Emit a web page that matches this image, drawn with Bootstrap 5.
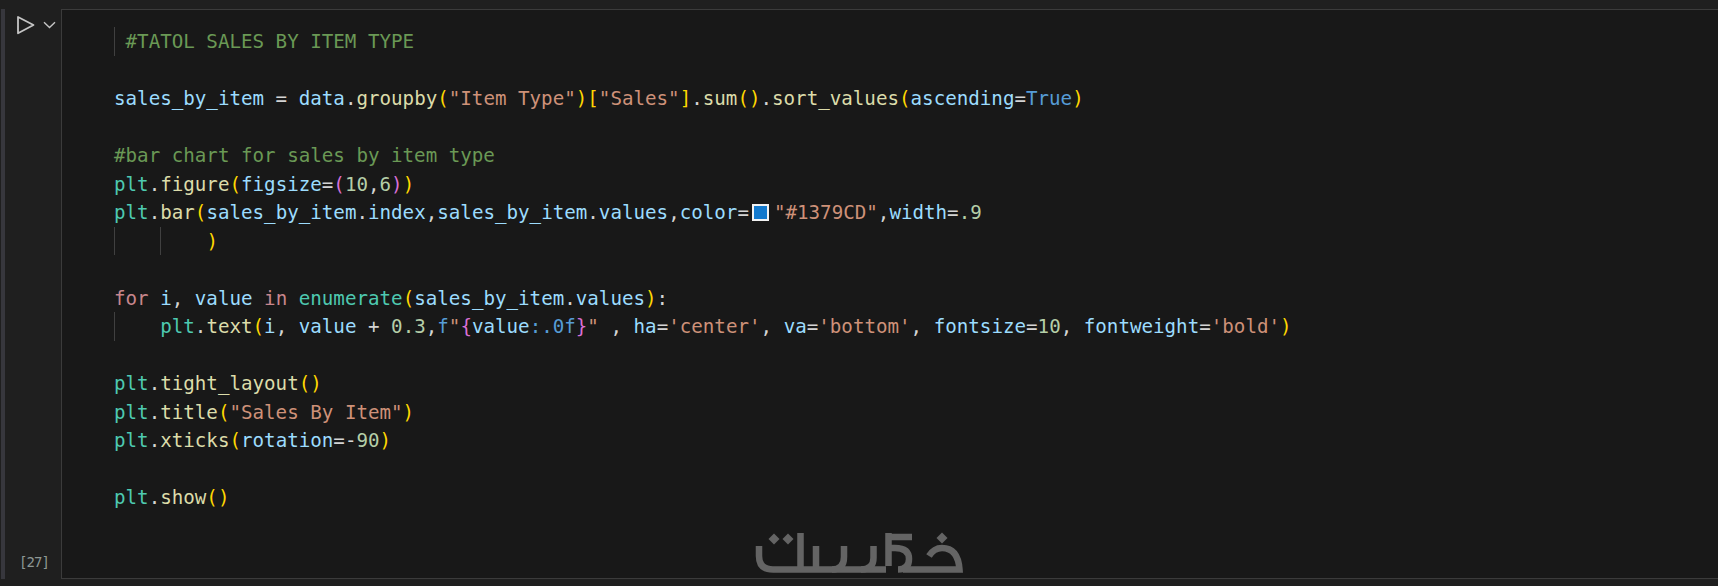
<!DOCTYPE html>
<html lang="en">
<head>
<meta charset="utf-8">
<title>Notebook cell</title>
<link href="https://cdn.jsdelivr.net/npm/bootstrap@5.3.0/dist/css/bootstrap.min.css" rel="stylesheet">
<style>
html,body{height:100%;background:#1f1f1f;overflow:hidden}
.nb-stage{height:586px;padding-top:9px;position:relative}
.nb-cell{height:570px}
.nb-strip{width:4px;margin-left:1px;background:#37373d;flex:none}
.nb-gutter{width:56px;flex:none;position:relative}
.nb-run{margin-top:6px;margin-left:11px;gap:8px}
.nb-count{font:14px/16px "DejaVu Sans Mono",monospace;color:#8d9794;padding-left:14px;padding-bottom:9px;letter-spacing:-.9px}
.nb-editor{background:#181818;border:1px solid #3b3b3b;border-right:0;padding:17px 0 0 52px;min-width:0}
.nb-code{font-family:"DejaVu Sans Mono",monospace;font-size:19.18px;color:#d4d4d4}
.ln{height:28.5px;line-height:30.5px;white-space:pre}
.ind{display:inline-block;width:46.2px;height:28.5px;vertical-align:top;border-left:1px solid #404040}
.ind1{width:11.55px}
.swatch{display:inline-block;width:17px;height:17px;background:#1379cd;border:2px solid #f2f2f2;margin:0 5px 0 3px;vertical-align:-2px}
.c{color:#6a9955}.v{color:#9cdcfe}.f{color:#dcdcaa}.k{color:#4ec9b0}.s{color:#ce9178}.n{color:#b5cea8}
.q{color:#c8868c}.b{color:#569cd6}.y{color:#ffd700}.o{color:#da70d6}
.nb-mark{position:absolute;left:750px;top:525px;width:215px;height:52px}
</style>
</head>
<body>
<div class="nb-stage">
  <div class="nb-cell d-flex">
    <div class="nb-strip"></div>
    <div class="nb-gutter d-flex flex-column justify-content-between">
      <div class="nb-run d-flex align-items-center">
        <svg width="19" height="20" viewBox="0 0 19 20" fill="none" stroke="#c5c5c5" stroke-width="1.8" stroke-linejoin="round"><path d="M2 2V18.300L17.500 10Z"/></svg>
        <svg width="13" height="8" viewBox="0 0 13 8" fill="none" stroke="#c5c5c5" stroke-width="1.4"><path d="M1 1.300 6.500 6.500 12 1.300"/></svg>
      </div>
      <div class="nb-count">[27]</div>
    </div>
    <div class="nb-editor flex-grow-1">
      <div class="nb-code">
<div class="ln"><span class="ind ind1"></span><span class="c">#TATOL SALES BY ITEM TYPE</span></div>
<div class="ln"></div>
<div class="ln"><span class="v">sales_by_item</span> = <span class="v">data</span>.<span class="f">groupby</span><span class="y">(</span><span class="s">"Item Type"</span><span class="y">)[</span><span class="s">"Sales"</span><span class="y">]</span>.<span class="f">sum</span><span class="y">()</span>.<span class="f">sort_values</span><span class="y">(</span><span class="v">ascending</span>=<span class="b">True</span><span class="y">)</span></div>
<div class="ln"></div>
<div class="ln"><span class="c">#bar chart for sales by item type</span></div>
<div class="ln"><span class="k">plt</span>.<span class="f">figure</span><span class="y">(</span><span class="v">figsize</span>=<span class="o">(</span><span class="n">10</span>,<span class="n">6</span><span class="o">)</span><span class="y">)</span></div>
<div class="ln"><span class="k">plt</span>.<span class="f">bar</span><span class="y">(</span><span class="v">sales_by_item</span>.<span class="v">index</span>,<span class="v">sales_by_item</span>.<span class="v">values</span>,<span class="v">color</span>=<span class="swatch"></span><span class="s">"#1379CD"</span>,<span class="v">width</span>=<span class="n">.9</span></div>
<div class="ln"><span class="ind"></span><span class="ind"></span><span class="y">)</span></div>
<div class="ln"></div>
<div class="ln"><span class="q">for</span> <span class="v">i</span>, <span class="v">value</span> <span class="q">in</span> <span class="k">enumerate</span><span class="y">(</span><span class="v">sales_by_item</span>.<span class="v">values</span><span class="y">)</span>:</div>
<div class="ln"><span class="ind"></span><span class="k">plt</span>.<span class="f">text</span><span class="y">(</span><span class="v">i</span>, <span class="v">value</span> + <span class="n">0.3</span>,<span class="b">f</span><span class="s">"</span><span class="o">{</span><span class="v">value</span><span class="b">:.0f</span><span class="o">}</span><span class="s">"</span> , <span class="v">ha</span>=<span class="s">'center'</span>, <span class="v">va</span>=<span class="s">'bottom'</span>, <span class="v">fontsize</span>=<span class="n">10</span>, <span class="v">fontweight</span>=<span class="s">'bold'</span><span class="y">)</span></div>
<div class="ln"></div>
<div class="ln"><span class="k">plt</span>.<span class="f">tight_layout</span><span class="y">()</span></div>
<div class="ln"><span class="k">plt</span>.<span class="f">title</span><span class="y">(</span><span class="s">"Sales By Item"</span><span class="y">)</span></div>
<div class="ln"><span class="k">plt</span>.<span class="f">xticks</span><span class="y">(</span><span class="v">rotation</span>=-<span class="n">90</span><span class="y">)</span></div>
<div class="ln"></div>
<div class="ln"><span class="k">plt</span>.<span class="f">show</span><span class="y">()</span></div>
      </div>
    </div>
  </div>
  <svg class="nb-mark" viewBox="750 525 215 52" fill="none" stroke="#646464" stroke-width="6.500" aria-label="logo">
    <path d="M759 546V556Q759 569.500 773 569.500H886"/>
    <path d="M800.500 533V569.500"/>
    <path d="M816 546V569.500"/>
    <path d="M844 546V557Q844 569.500 832 569.500"/>
    <path d="M873.500 546V558Q873.500 569.500 861 569.500"/>
    <path d="M888.500 533V566"/>
    <path d="M886 537H912"/>
    <path d="M890 548H895Q909 548 909 559Q909 569.500 898 569.500"/>
    <path d="M903 569.500H959.500Q958 548 942 548Q934 548 929 556"/>
    <g fill="#646464" stroke="none">
      <path d="M774 533.500 779.500 539 774 544.500 768.500 539Z"/>
      <path d="M788 533.500 793.500 539 788 544.500 782.500 539Z"/>
      <path d="M942 532.500 947.500 538 942 543.500 936.500 538Z"/>
    </g>
  </svg>
</div>
<script src="https://cdn.jsdelivr.net/npm/bootstrap@5.3.0/dist/js/bootstrap.bundle.min.js"></script>
</body>
</html>
